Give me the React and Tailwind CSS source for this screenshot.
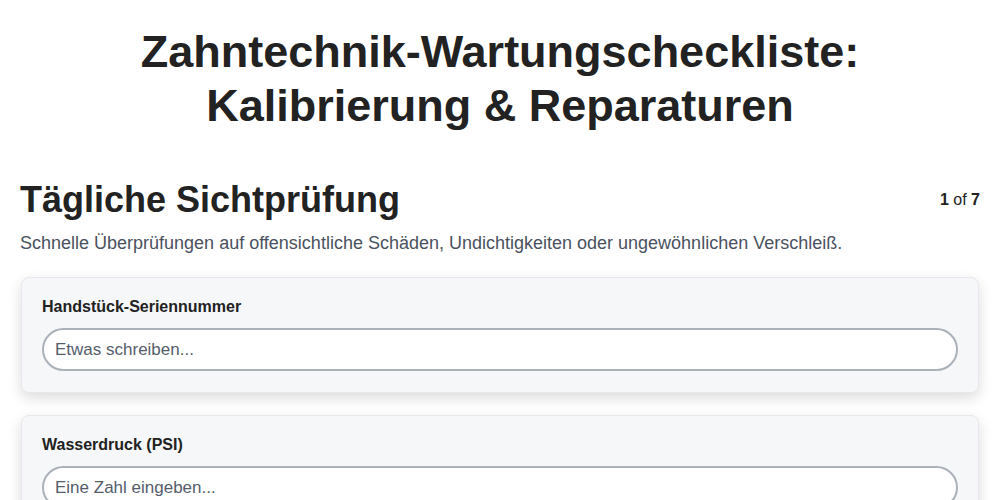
import React from "react";

const fields = [
  { id: "serial", label: "Handstück-Seriennummer", type: "text", placeholder: "Etwas schreiben..." },
  { id: "pressure", label: "Wasserdruck (PSI)", type: "number", placeholder: "Eine Zahl eingeben..." },
  { id: "notes", label: "Auffälligkeiten", type: "text", placeholder: "Etwas schreiben..." },
];

function FieldCard({ field }) {
  return (
    <div className="rounded-lg border border-[#e6e8ec] bg-[#f6f7f9] px-5 pt-5 pb-[21px] shadow-[0_5px_14px_rgba(0,0,0,0.14)]">
      <label htmlFor={field.id} className="block text-[16px] font-bold leading-[18px] text-[#222]">
        {field.label}
      </label>
      <input
        id={field.id}
        type={field.type}
        placeholder={field.placeholder}
        className="mt-3 block h-[43px] w-full rounded-full border-2 border-[#aab1b9] bg-white px-[11px] text-[17px] text-[#222] outline-none placeholder:text-[#555d6b] [appearance:textfield]"
      />
    </div>
  );
}

export default function App() {
  return (
    <div className="min-h-screen bg-white px-5 font-['Liberation_Sans',Arial,sans-serif] text-[#222]">
      <h1 className="pt-[25px] text-center text-[45px] font-bold leading-[54px]">
        Zahntechnik-Wartungscheckliste:
        <br />
        Kalibrierung &amp; Reparaturen
      </h1>

      <div className="mt-[45px] flex items-center justify-between">
        <h2 className="text-[36px] font-bold leading-[43px]">Tägliche Sichtprüfung</h2>
        <span className="text-[16px]">
          <b>1</b> of <b>7</b>
        </span>
      </div>
      <p className="mt-[10px] text-[18px] leading-6 text-[#4a5160]">
        Schnelle Überprüfungen auf offensichtliche Schäden, Undichtigkeiten oder ungewöhnlichen Verschleiß.
      </p>

      <div className="mt-[22px] flex flex-col gap-[22px] px-px pb-8">
        {fields.map((f) => (
          <FieldCard key={f.id} field={f} />
        ))}
      </div>
    </div>
  );
}
